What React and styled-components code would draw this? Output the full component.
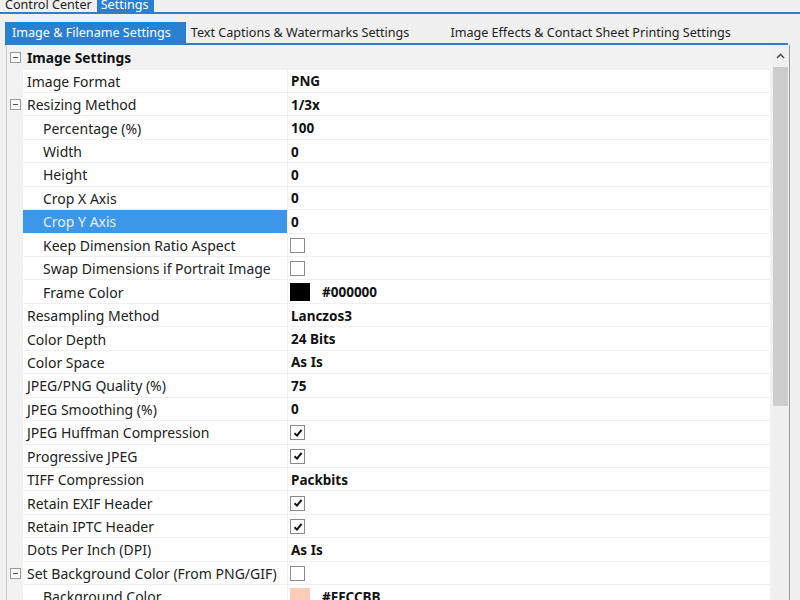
import React from 'react';
import styled, { createGlobalStyle } from 'styled-components';

const GlobalStyle = createGlobalStyle`
  html, body {
    margin: 0;
    padding: 0;
    background: #f0f0f0;
    overflow: hidden;
  }
  body {
    font-family: 'Noto Sans', 'Open Sans', sans-serif;
    color: #1e1e1e;
  }
`;

const BLUE = '#2a7fcf';

const Page = styled.div`
  width: 800px;
  height: 600px;
  display: flex;
  flex-direction: column;
`;

const TopBar = styled.div`
  display: flex;
  height: 12px;
  overflow: hidden;
  border-bottom: 2px solid ${BLUE};
  padding-left: 1px;
`;

const TopTab = styled.div`
  display: flex;
  align-items: flex-end;
  padding: 0 ${({ $active }) => ($active ? 5 : 5)}px 0 4px;
  font-size: 12.6px;
  line-height: 14px;
  background: ${({ $active }) => ($active ? BLUE : 'transparent')};
  color: ${({ $active }) => ($active ? '#fff' : '#222')};
`;

const Body = styled.div`
  flex: 1;
  display: flex;
  flex-direction: column;
  padding: 8px 10px 0 5px;
  min-height: 0;
`;

const TabRow = styled.div`
  display: flex;
  height: 21px;
  border-bottom: 2px solid ${BLUE};
  margin-right: 2px;
`;

const InnerTab = styled.div`
  display: flex;
  align-items: center;
  padding: 0 ${({ $pad }) => $pad || 6}px 0 ${({ $left }) => $left ?? 7}px;
  font-size: 12.6px;
  background: ${({ $active }) => ($active ? BLUE : 'transparent')};
  color: ${({ $active }) => ($active ? '#fff' : '#222')};
  white-space: nowrap;
`;

const GridFrame = styled.div`
  flex: 1;
  display: flex;
  min-height: 0;
  border-left: 1px solid #c8c8c8;
  border-right: 1px solid #9a9a9a;
  margin-left: 1px;
`;

const GridBody = styled.div`
  flex: 1;
  background: #f2f2f2;
  overflow: hidden;
`;

const Row = styled.div`
  display: grid;
  grid-template-columns: 16px 265px 1fr;
  height: 23.45px;
  box-sizing: border-box;
  font-size: 14px;
`;

const Margin = styled.div`
  display: flex;
  align-items: center;
  justify-content: center;
  background: #f2f2f2;
`;

const Label = styled.div`
  display: flex;
  align-items: center;
  padding-left: ${({ $nested }) => ($nested ? 20 : 4)}px;
  padding-top: 1px;
  background: ${({ $selected }) => ($selected ? '#3d97e8' : '#fff')};
  color: ${({ $selected }) => ($selected ? '#e4eefc' : '#222')};
  border-bottom: 1px solid #f0f0f0;
  border-right: 1px solid #f0f0f0;
  white-space: nowrap;
`;

const Value = styled.div`
  display: flex;
  align-items: center;
  gap: 12px;
  padding-left: 3px;
  padding-top: 1px;
  background: #fff;
  border-bottom: 1px solid #f0f0f0;
  font-size: 13.5px;
  font-weight: 700;
  color: #111;
  margin-right: 2px;
`;

const CategoryRow = styled.div`
  display: grid;
  grid-template-columns: 16px 1fr;
  height: 24.5px;
  background: #f2f2f2;
`;

const CategoryTitle = styled.div`
  display: flex;
  align-items: center;
  padding-left: 4px;
  font-size: 13.8px;
  font-weight: 700;
  color: #111;
`;

const Toggle = styled.div`
  width: 9px;
  height: 9px;
  border: 1px solid #999;
  background: #fafafa;
  position: relative;
  &::after {
    content: '';
    position: absolute;
    left: 2px;
    right: 2px;
    top: 4px;
    height: 1px;
    background: #555;
  }
`;

const Check = styled.div`
  width: 13px;
  height: 13px;
  border: 1px solid #8a8a8a;
  background: #fff;
  display: flex;
  align-items: center;
  justify-content: center;
  margin-left: -1px;
`;

const Swatch = styled.div`
  width: 20px;
  height: 18px;
  margin-left: -1px;
  background: ${({ $color }) => $color};
`;

const Scrollbar = styled.div`
  width: 17px;
  display: flex;
  flex-direction: column;
  background: #f0f0f0;
`;

const ScrollArrow = styled.div`
  height: 22px;
  display: flex;
  align-items: center;
  justify-content: center;
`;

const Thumb = styled.div`
  height: 339px;
  margin: 0 1px;
  background: #cdcdcd;
`;

const CheckBox = ({ checked }) => (
  <Check>
    {checked && (
      <svg width="10" height="10" viewBox="0 0 10 10">
        <path d="M1.5 5.2 L4 7.6 L8.6 1.8" fill="none" stroke="#111" strokeWidth="2" />
      </svg>
    )}
  </Check>
);

const rows = [
  { label: 'Image Format', value: 'PNG' },
  { label: 'Resizing Method', value: '1/3x', toggle: true },
  { label: 'Percentage (%)', value: '100', nested: true },
  { label: 'Width', value: '0', nested: true },
  { label: 'Height', value: '0', nested: true },
  { label: 'Crop X Axis', value: '0', nested: true },
  { label: 'Crop Y Axis', value: '0', nested: true, selected: true },
  { label: 'Keep Dimension Ratio Aspect', check: false, nested: true },
  { label: 'Swap Dimensions if Portrait Image', check: false, nested: true },
  { label: 'Frame Color', color: '#000000', value: '#000000', nested: true },
  { label: 'Resampling Method', value: 'Lanczos3' },
  { label: 'Color Depth', value: '24 Bits' },
  { label: 'Color Space', value: 'As Is' },
  { label: 'JPEG/PNG Quality (%)', value: '75' },
  { label: 'JPEG Smoothing (%)', value: '0' },
  { label: 'JPEG Huffman Compression', check: true },
  { label: 'Progressive JPEG', check: true },
  { label: 'TIFF Compression', value: 'Packbits' },
  { label: 'Retain EXIF Header', check: true },
  { label: 'Retain IPTC Header', check: true },
  { label: 'Dots Per Inch (DPI)', value: 'As Is' },
  { label: 'Set Background Color (From PNG/GIF)', check: false, toggle: true },
  { label: 'Background Color', color: '#FFCCBB', value: '#FFCCBB', nested: true },
];

const App = () => (
  <Page>
    <GlobalStyle />
    <TopBar>
      <TopTab>Control Center</TopTab>
      <TopTab $active>Settings</TopTab>
    </TopBar>
    <Body>
      <TabRow>
        <InnerTab $active $pad={15}>Image &amp; Filename Settings</InnerTab>
        <InnerTab $left={5} $pad={40}>Text Captions &amp; Watermarks Settings</InnerTab>
        <InnerTab $left={1}>Image Effects &amp; Contact Sheet Printing Settings</InnerTab>
      </TabRow>
      <GridFrame>
        <GridBody>
          <CategoryRow>
            <Margin>
              <Toggle />
            </Margin>
            <CategoryTitle>Image Settings</CategoryTitle>
          </CategoryRow>
          {rows.map((r) => (
            <Row key={r.label}>
              <Margin>{r.toggle && <Toggle />}</Margin>
              <Label $nested={r.nested} $selected={r.selected}>
                {r.label}
              </Label>
              <Value>
                {r.check !== undefined && <CheckBox checked={r.check} />}
                {r.color && <Swatch $color={r.color} />}
                {r.value}
              </Value>
            </Row>
          ))}
        </GridBody>
        <Scrollbar>
          <ScrollArrow>
            <svg width="9" height="6" viewBox="0 0 9 6">
              <path d="M1 5 L4.5 1.5 L8 5" fill="none" stroke="#555" strokeWidth="1.6" />
            </svg>
          </ScrollArrow>
          <Thumb />
        </Scrollbar>
      </GridFrame>
    </Body>
  </Page>
);

export default App;
